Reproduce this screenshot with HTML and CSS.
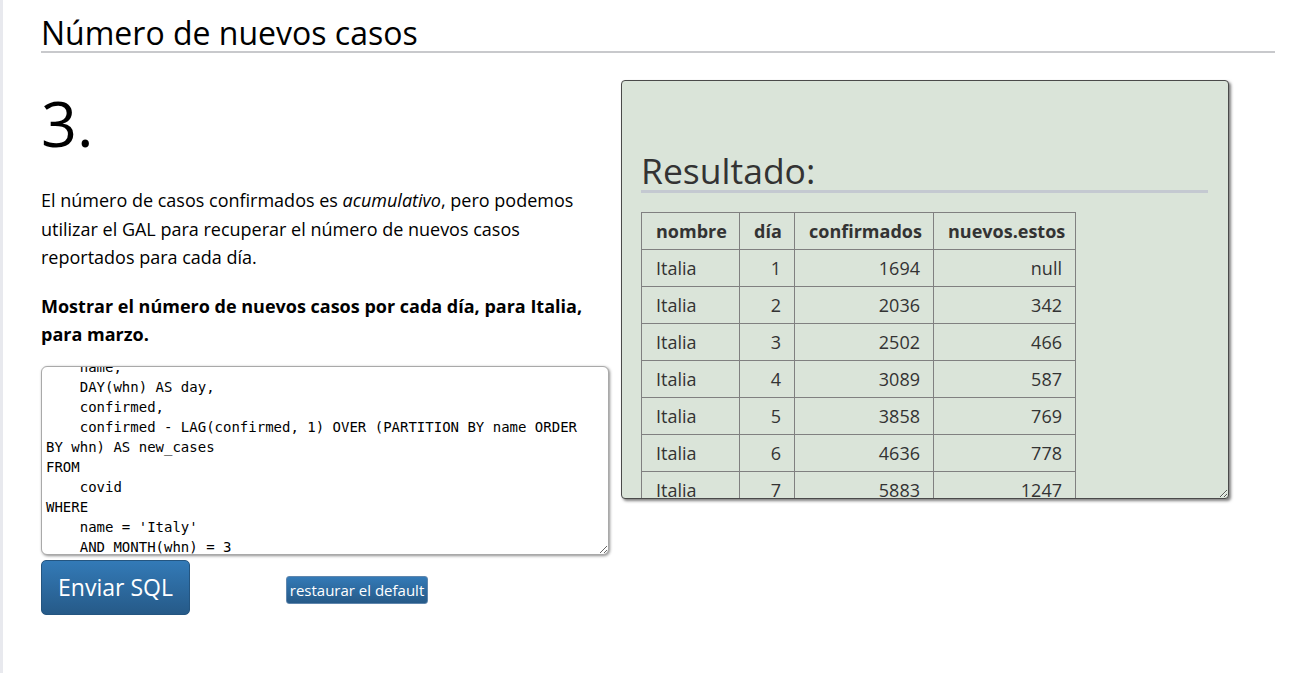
FILE: index.html
```html
<!DOCTYPE html>
<html lang="es">
<head>
<meta charset="utf-8">
<title>Número de nuevos casos</title>
<link rel="stylesheet" href="styles.css">
</head>
<body>
<div class="page">
  <h2 class="title">Número de nuevos casos</h2>
  <div class="row">
    <div class="left">
      <div class="num">3.</div>
      <p class="intro">El número de casos confirmados es <em>acumulativo</em>, pero podemos utilizar el GAL para recuperar el número de nuevos casos reportados para cada día.</p>
      <p class="task">Mostrar el número de nuevos casos por cada día, para Italia, para marzo.</p>
      <textarea class="sql" id="sql" spellcheck="false">SELECT
    name,
    DAY(whn) AS day,
    confirmed,
    confirmed - LAG(confirmed, 1) OVER (PARTITION BY name ORDER BY whn) AS new_cases
FROM
    covid
WHERE
    name = 'Italy'
    AND MONTH(whn) = 3
    AND YEAR(whn) = 2020
ORDER BY
    whn</textarea>
      <div class="actions">
        <button class="btn btn-big" type="button">Enviar SQL</button>
        <button class="btn btn-small" type="button">restaurar el default</button>
      </div>
    </div>
    <div class="result">
      <h2 class="result-title">Resultado:</h2>
      <table class="grid">
        <colgroup>
          <col class="c1"><col class="c2"><col class="c3"><col class="c4">
        </colgroup>
        <thead>
          <tr><th>nombre</th><th>día</th><th>confirmados</th><th>nuevos.estos</th></tr>
        </thead>
        <tbody>
          <tr><td>Italia</td><td class="n">1</td><td class="n">1694</td><td class="n">null</td></tr>
          <tr><td>Italia</td><td class="n">2</td><td class="n">2036</td><td class="n">342</td></tr>
          <tr><td>Italia</td><td class="n">3</td><td class="n">2502</td><td class="n">466</td></tr>
          <tr><td>Italia</td><td class="n">4</td><td class="n">3089</td><td class="n">587</td></tr>
          <tr><td>Italia</td><td class="n">5</td><td class="n">3858</td><td class="n">769</td></tr>
          <tr><td>Italia</td><td class="n">6</td><td class="n">4636</td><td class="n">778</td></tr>
          <tr><td>Italia</td><td class="n">7</td><td class="n">5883</td><td class="n">1247</td></tr>
          <tr><td>Italia</td><td class="n">8</td><td class="n">7375</td><td class="n">1492</td></tr>
        </tbody>
      </table>
    </div>
  </div>
</div>
<script src="script.js"></script>
</body>
</html>
```

FILE: styles.css
```css
* { box-sizing: border-box; }

html, body { margin: 0; background: #fff; }

body {
  font-family: "Open Sans", "Noto Sans", sans-serif;
  color: #000;
}

.page {
  border-left: 3px solid #e8e9ee;
  min-height: 673px;
  padding: 0 36px 0 38px;
}

.title {
  margin: 0;
  padding-top: 14px;
  font-weight: 400;
  font-size: 32px;
  line-height: 37px;
  border-bottom: 2px solid #c8c9cc;
}

.row {
  display: flex;
  align-items: flex-start;
  gap: 12px;
  margin-top: 27px;
}

.left {
  width: 568px;
  flex: 0 0 568px;
}

.num {
  margin-top: 4px;
  font-size: 63px;
  line-height: 78px;
  font-weight: 400;
}

.intro, .task {
  margin: 0;
  font-size: 18px;
  line-height: 28.5px;
}

.intro { margin-top: 24px; margin-bottom: 20px; }

.task { font-weight: 700; }

.sql {
  display: block;
  width: 568px;
  height: 189px;
  margin-top: 17px;
  padding: 2px 12px 2px 4px;
  border: 1px solid #a9a9a9;
  border-radius: 6px;
  box-shadow: 1px 1px 3px rgba(0, 0, 0, 0.45);
  font-family: "DejaVu Sans Mono", "Liberation Mono", monospace;
  font-size: 14px;
  line-height: 20px;
  color: #000;
  background: #fff;
  overflow: hidden;
  resize: both;
  white-space: pre-wrap;
}

.actions {
  display: flex;
  align-items: center;
  margin-top: 5px;
}

.btn {
  font-family: "Open Sans", "Noto Sans", sans-serif;
  color: #fff;
  background: linear-gradient(#337ab7, #265a88);
  border: 1px solid #245580;
  cursor: pointer;
  padding: 0;
}

.btn-big {
  width: 149px;
  height: 55px;
  border-radius: 5px;
  font-size: 23px;
}

.btn-small {
  width: 142px;
  height: 28px;
  margin-left: 96px;
  margin-top: 5px;
  border-radius: 3px;
  border-color: #5f86ad;
  font-size: 15px;
  line-height: 26px;
}

.result {
  width: 608px;
  height: 419px;
  flex: 0 0 608px;
  padding: 69px 20px 0 19px;
  background: #dae4d9;
  border: 1px solid #4a4a4a;
  border-radius: 4px;
  box-shadow: 2px 2px 3px rgba(0, 0, 0, 0.5);
  overflow: hidden;
  resize: both;
  color: #333;
}

.result-title {
  margin: 0 0 19px;
  font-weight: 400;
  font-size: 35.5px;
  line-height: 40px;
  color: #333;
  border-bottom: 3px solid #c4c9d1;
}

.grid {
  border-collapse: collapse;
  table-layout: fixed;
  width: 434px;
  font-size: 18px;
}

.grid .c1 { width: 98px; }
.grid .c2 { width: 55px; }
.grid .c3 { width: 139px; }
.grid .c4 { width: 142px; }

.grid th, .grid td {
  border: 1px solid #808080;
  padding: 6px 13px 6px 14px;
  line-height: 24px;
  height: 37px;
  font-weight: 400;
  text-align: left;
  white-space: nowrap;
}

.grid th { font-weight: 700; }

.grid td.n { text-align: right; }
```

FILE: script.js
```js
document.getElementById('sql').scrollTop = 32;
```
